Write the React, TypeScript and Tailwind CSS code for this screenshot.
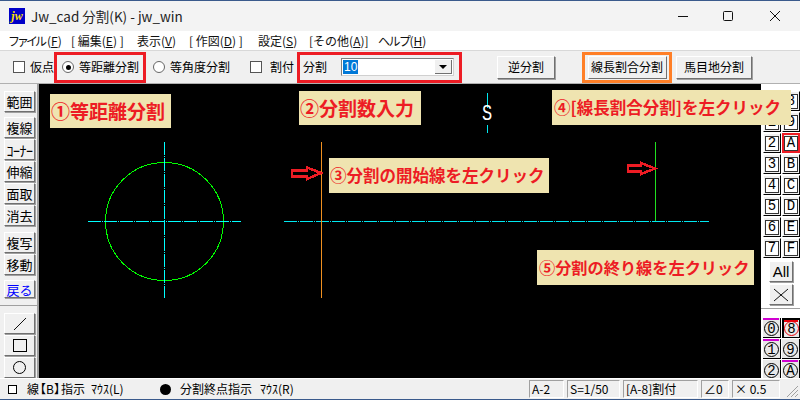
import React from "react";

const JP = "font-['Noto_Sans_CJK_JP','Liberation_Sans',sans-serif]";

function Btn({ children, cls = "", text = "text-black" }: { children?: React.ReactNode; cls?: string; text?: string }) {
  return (
    <div className={`flex items-center justify-center bg-[#f0f0f0] border border-t-white border-l-white border-r-[#707070] border-b-[#707070] shadow-[1px_1px_0_#a0a0a0] overflow-hidden whitespace-nowrap ${text} ${cls}`}>
      {children}
    </div>
  );
}

function Check() {
  return <div className="w-3 h-3 bg-white border border-[#555] shrink-0" />;
}

function Radio({ on }: { on?: boolean }) {
  return (
    <div className="w-3 h-3 rounded-full bg-white border border-[#666] shrink-0 flex items-center justify-center">
      {on && <div className="w-[5px] h-[5px] rounded-full bg-black" />}
    </div>
  );
}

function Callout({ cls, children }: { cls: string; children: React.ReactNode }) {
  return (
    <div className={`absolute z-10 bg-[#efe4b0] text-[#ed1c24] font-bold flex items-center whitespace-nowrap overflow-hidden ${cls}`}>
      {children}
    </div>
  );
}

function LeftGroup({ items, cls = "" }: { items: React.ReactNode[]; cls?: string }) {
  return (
    <div className={`flex flex-col gap-[1px] ${cls}`}>
      {items.map((it, i) => (
        <Btn key={i} cls="w-[31px] h-[21px] text-[13px] leading-none">{it}</Btn>
      ))}
    </div>
  );
}

function LayerCell({ t, cls = "" }: { t: string; cls?: string }) {
  return (
    <div className={`w-[18px] h-[20px] bg-[#f0f0f0] border flex items-center justify-center ${cls || "border-t-white border-l-white border-r-black border-b-black"}`}>
      <div className="w-[14px] h-[15px] bg-white border border-[#333] flex items-center justify-center font-['Liberation_Mono',monospace] text-[14px] leading-none text-black">{t}</div>
    </div>
  );
}

function GroupCell({ t, bar, red }: { t: string; bar?: boolean; red?: boolean }) {
  return (
    <div className={`relative w-[18px] h-[20px] bg-[#e8e8e8] border-b border-r border-black flex items-end justify-center ${red ? "border-t-2 border-l-2 border-t-black border-l-black" : ""}`}>
      {bar && <div className={`absolute top-[0px] left-0 right-[1px] h-[2px] ${red ? "bg-red-600" : "bg-[#d000d0]"}`} />}
      <div className={`w-[15px] h-[15px] mb-[1px] rounded-full border flex items-center justify-center font-['Liberation_Mono',monospace] text-[14px] leading-none text-black ${red ? "border-red-600" : "border-black"}`}>{t}</div>
    </div>
  );
}

function StatusCell({ cls, children }: { cls: string; children: React.ReactNode }) {
  return (
    <div className={`h-[18px] bg-[#f0f0f0] border border-t-[#a0a0a0] border-l-[#a0a0a0] border-r-white border-b-white flex items-center text-[12px] leading-none whitespace-nowrap pl-[2px] ${cls}`}>
      {children}
    </div>
  );
}

export default function App() {
  return (
    <div className={`w-[800px] h-[400px] relative overflow-hidden flex flex-col bg-[#f0f0f0] text-black ${JP}`}>
      {/* Title bar */}
      <div className="h-[31px] shrink-0 bg-[#f3f3f3] border-t border-[#3a5a8c] flex items-center pl-[9px]">
        <div className="w-[16px] h-[16px] bg-[#0000c8] flex items-center justify-center text-[#ffe000] font-['Liberation_Serif',serif] font-bold italic text-[12px] leading-none shrink-0">jw</div>
        <span className="ml-[6px] text-[13.5px] text-[#222]">Jw_cad 分割(K) - jw_win</span>
        <div className="ml-auto flex items-center h-full">
          <svg width="14" height="14" viewBox="0 0 14 14" className="mr-[31px]"><path d="M2 7.5H12" stroke="#111" strokeWidth="1" /></svg>
          <svg width="14" height="14" viewBox="0 0 14 14" className="mr-[33px]"><rect x="2.5" y="2.5" width="9" height="9" rx="1" fill="none" stroke="#111" strokeWidth="1" /></svg>
          <svg width="14" height="14" viewBox="0 0 14 14" className="mr-[18px]"><path d="M2 2L12 12M12 2L2 12" stroke="#111" strokeWidth="1" /></svg>
        </div>
      </div>

      {/* Menu */}
      <div className="h-[20px] shrink-0 bg-white flex items-center text-[12px] leading-none text-[#111] pl-[8px] border-b border-[#d8d8d8] whitespace-nowrap">
        <span className="w-[63px]"><span className="tracking-[-3px]">ファイル</span><span className="ml-[3px]">(<u>F</u>)</span></span>
        <span className="w-[66px]">[ 編集(<u>E</u>) ]</span>
        <span className="w-[52px]">表示(<u>V</u>)</span>
        <span className="w-[69px]">[ 作図(<u>D</u>) ]</span>
        <span className="w-[51px]">設定(<u>S</u>)</span>
        <span className="w-[69px]">[その他(<u>A</u>)]</span>
        <span><span className="tracking-[-1.5px]">ヘルプ</span>(<u>H</u>)</span>
      </div>

      {/* Toolbar */}
      <div className="h-[33px] shrink-0 bg-[#f0f0f0] flex items-center text-[12px] leading-none relative border-b border-[#b0b0b0] whitespace-nowrap">
        <div className="flex items-center pl-[13px]"><Check /><span className="ml-[5px] w-[25px]">仮点</span></div>
        <div className="flex items-center h-[31px] w-[92px] border-[3px] border-[#ed1c24] ml-[-1px] pl-[5px]">
          <Radio on /><span className="ml-[5px]">等距離分割</span>
        </div>
        <div className="flex items-center ml-[7px]"><Radio /><span className="ml-[5px] w-[60px]">等角度分割</span></div>
        <div className="flex items-center ml-[20px]"><Check /><span className="ml-[8px] w-[27px]">割付</span></div>
        <div className="flex items-center h-[31px] w-[165px] border-[3px] border-[#ed1c24] pl-[3px]">
          <span className="w-[38px]">分割</span>
          <div className="w-[113px] h-[18px] bg-white border border-t-[#808080] border-l-[#808080] border-r-[#d0d0d0] border-b-[#d0d0d0] flex items-center p-[1px]">
            <span className="bg-[#0078d7] text-white text-[12px] h-[14px] leading-[14px] px-[1px] font-['Liberation_Sans',sans-serif]">10</span>
            <div className="ml-auto w-[17px] h-[14px] bg-[#f0f0f0] border-r border-b border-[#707070] flex items-center justify-center">
              <div className="w-0 h-0 border-l-[4px] border-r-[4px] border-t-[4px] border-l-transparent border-r-transparent border-t-black" />
            </div>
          </div>
        </div>
        <Btn cls="w-[58px] h-[23px] ml-[35px]">逆分割</Btn>
        <div className="flex items-center justify-center h-[31px] w-[90px] border-[3px] border-[#ff7f27] ml-[27px]">
          <Btn cls="w-[79px] h-[23px] border-t-[#555] border-l-[#555] border-r-[#555] border-b-[#555] shadow-none">線長割合分割</Btn>
        </div>
        <Btn cls="w-[76px] h-[23px] ml-[4px]">馬目地分割</Btn>
      </div>

      {/* Body */}
      <div className="flex-1 min-h-0 flex">
        {/* Left tools */}
        <div className="w-[39px] shrink-0 flex flex-col items-start pl-[4px] pt-[7px] border-r-[2px] border-[#a0a0a0] overflow-hidden bg-[#f0f0f0]">
          <LeftGroup cls="mb-[5px]" items={["範囲"]} />
          <LeftGroup cls="mb-[6px]" items={["複線", <span className="text-[14px] tracking-[-0.5px]">ｺｰﾅｰ</span>, "伸縮", "面取", "消去"]} />
          <LeftGroup cls="mb-[5px]" items={["複写", "移動"]} />
          <Btn cls="w-[31px] h-[22px] text-[13px] leading-none" text="text-[#0000ff]">戻る</Btn>
          <div className="h-[1px] w-[39px] -ml-[4px] bg-[#a0a0a0] mt-[7px] mb-[7px] shrink-0" />
          <div className="flex flex-col gap-[1px]">
            <Btn cls="w-[31px] h-[21px]"><svg width="16" height="16" viewBox="0 0 16 16"><path d="M2 14L14 2" stroke="#111" /></svg></Btn>
            <Btn cls="w-[31px] h-[21px]"><div className="w-[14px] h-[13px] border border-black" /></Btn>
            <Btn cls="w-[31px] h-[21px]"><div className="w-[13px] h-[13px] rounded-full border border-black" /></Btn>
          </div>
        </div>

        {/* Canvas */}
        <div className="relative flex-1 bg-black overflow-visible min-w-0">
          <svg className="absolute inset-0" width="722" height="294" viewBox="39 84 722 294" shapeRendering="crispEdges">
            <circle cx="164.5" cy="221.5" r="59" fill="none" stroke="#00ff00" strokeWidth="1" />
            <path d="M164.5 142V298M88 221.5H241" stroke="#00ffff" strokeWidth="1" strokeDasharray="13 1 1 1" fill="none" />
            <path d="M284 221.5H709" stroke="#00e8f0" strokeWidth="1" strokeDasharray="13 1 1 1" fill="none" />
            <path d="M321.5 142V298" stroke="#f09020" strokeWidth="1" fill="none" />
            <path d="M655.5 142V221" stroke="#20e020" strokeWidth="1" fill="none" />
            <path d="M487.5 93V108M487.5 125V133" stroke="#00e8f0" strokeWidth="1" fill="none" />
            <path d="M292 170.5H307V167.5L321 173L307 179V176.5H292Z" fill="none" stroke="#ed1c24" strokeWidth="2.5" />
            <path d="M628 165.5H641V163L655 168.5L641 174V171.5H628Z" fill="none" stroke="#ed1c24" strokeWidth="2.5" />
          </svg>
          <span className="absolute left-[443px] top-[22px] text-white text-[17px] leading-none font-['Liberation_Mono',monospace] scale-y-125">S</span>

          <Callout cls="left-[11px] top-[10px] w-[121px] h-[34px] pl-[1px] text-[19px]">①等距離分割</Callout>
          <Callout cls="left-[260px] top-[7px] w-[122px] h-[34px] pl-[1px] text-[19px]">②分割数入力</Callout>
          <Callout cls="left-[290px] top-[74px] w-[220px] h-[35px] pl-[1px] text-[16.5px]">③分割の開始線を左クリック</Callout>
          <Callout cls="left-[513px] top-[6px] w-[239px] h-[35px] pl-[2px] text-[16.5px]">④[線長割合分割]を左クリック</Callout>
          <Callout cls="left-[498px] top-[166px] w-[217px] h-[35px] pl-[2px] text-[16.2px]">⑤分割の終り線を左クリック</Callout>
        </div>

        {/* Right tools */}
        <div className="w-[39px] shrink-0 bg-white flex flex-col pl-[2px] pt-[7px] overflow-hidden">
          <div className="flex flex-col gap-[1px]">
            {[["0", "8"], ["1", "9"], ["2", "A"], ["3", "B"], ["4", "C"], ["5", "D"], ["6", "E"], ["7", "F"]].map(([a, b]) => (
              <div key={a} className="flex gap-[1px] shrink-0">
                <LayerCell t={a} />
                <LayerCell t={b} cls={b === "A" ? "border-2 border-[#ed1c24]" : ""} />
              </div>
            ))}
          </div>
          <Btn cls="w-[24px] h-[21px] ml-[6px] mt-[3px] text-[15px] leading-none shrink-0 font-['Liberation_Sans',sans-serif]">All</Btn>
          <Btn cls="w-[24px] h-[21px] ml-[6px] mt-[2px] shrink-0"><svg width="16" height="14" viewBox="0 0 16 14"><path d="M1 1L15 13M15 1L1 13" stroke="#111" /></svg></Btn>
          <div className="h-[1px] w-[39px] -ml-[2px] bg-[#a0a0a0] mt-[3px] mb-[9px] shrink-0" />
          <div className="flex flex-col gap-[1px]">
            {([["0", true, "8", true, true], ["1", true, "9", false, false], ["2", false, "A", true, false]] as [string, boolean, string, boolean, boolean][]).map(([a, ab, b, bb, r]) => (
              <div key={a} className="flex shrink-0 gap-[1px]">
                <GroupCell t={a} bar={ab} />
                <GroupCell t={b} bar={bb} red={r} />
              </div>
            ))}
          </div>
        </div>
      </div>

      {/* Status */}
      <div className="h-[22px] shrink-0 bg-[#f0f0f0] border-t border-white border-b border-b-[#3a5a8c] flex items-center text-[12px] leading-none relative whitespace-nowrap">
        <div className="w-[9px] h-[9px] border border-black bg-white ml-[8px] shrink-0" />
        <span className="ml-[10px] w-[56px]">線<span className="ml-[-5px]">【</span>B<span className="mr-[-5px]">】</span>指示</span>
        <span className="ml-[8px] w-[69px] text-[12px]">ﾏｳｽ(L)</span>
        <div className="w-[11px] h-[11px] rounded-full bg-black shrink-0" />
        <span className="ml-[9px] w-[72px]">分割終点指示</span>
        <span className="ml-[8px] text-[12px]">ﾏｳｽ(R)</span>
        <div className="ml-auto flex items-center gap-[3px] pr-[20px]">
          <StatusCell cls="w-[35px]">A-2</StatusCell>
          <StatusCell cls="w-[53px]">S=1/50</StatusCell>
          <StatusCell cls="w-[75px]">[A-8]割付</StatusCell>
          <StatusCell cls="w-[28px]">∠0</StatusCell>
          <StatusCell cls="w-[48px]">× 0.5</StatusCell>
        </div>
        <svg className="absolute right-[1px] bottom-[1px]" width="14" height="14" viewBox="0 0 14 14"><path d="M13 2L2 13M13 6L6 13M13 10L10 13" stroke="#a0a0a0" /></svg>
      </div>
    </div>
  );
}
